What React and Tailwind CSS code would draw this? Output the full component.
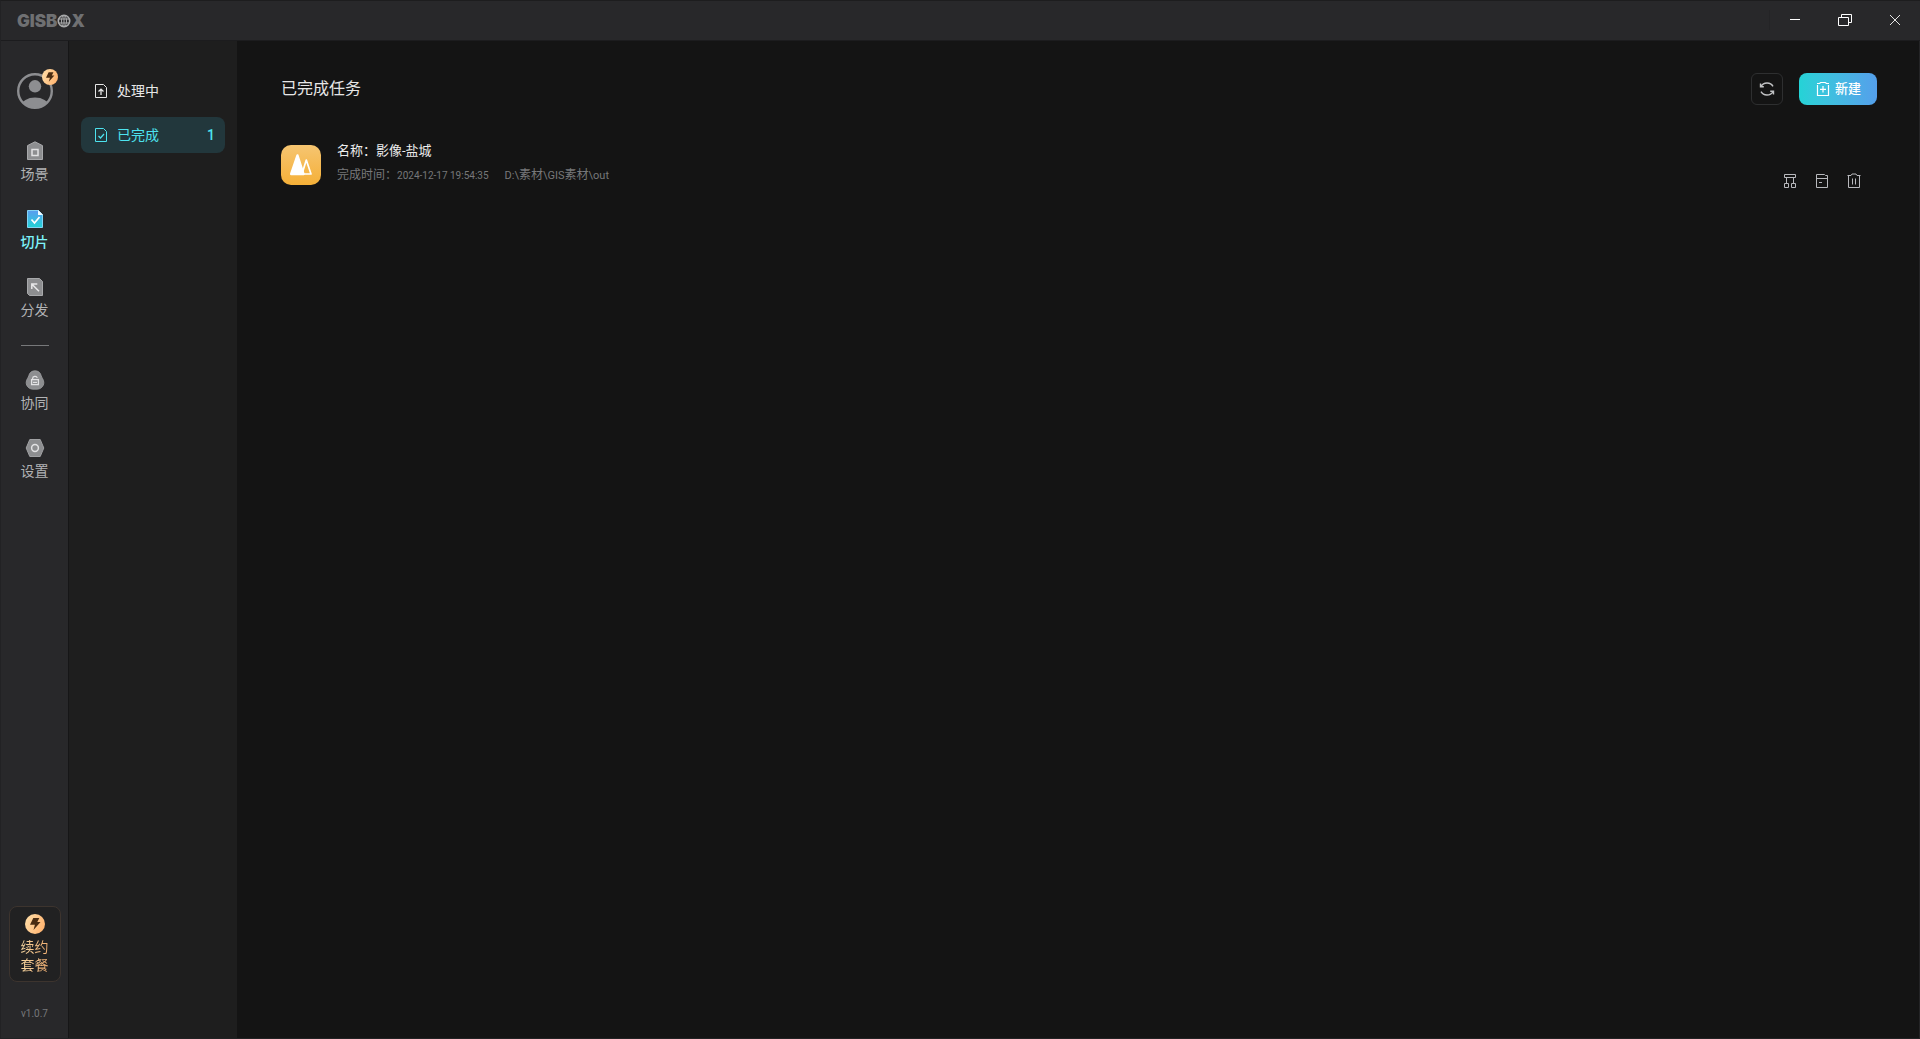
import React from "react";

const HomeIcon = () => (
  <svg width="20" height="20" viewBox="0 0 20 20" fill="none">
    <path d="M2.5 4.6 10 0.8l7.500 3.800V18.500h-15z" fill="#8d8e90" stroke="#a8a9ab" />
    <rect x="7" y="8.500" width="6" height="6" stroke="#e2e2e3" strokeWidth="1.500" />
  </svg>
);

const SliceIcon = () => (
  <svg width="20" height="20" viewBox="0 0 20 20" fill="none">
    <defs>
      <linearGradient id="slice" x1="0" y1="0" x2="0" y2="1">
        <stop stopColor="#5b9cf0" />
        <stop offset="1" stopColor="#22d3d6" />
      </linearGradient>
    </defs>
    <path d="M2.500 1.500h11l4 4v13h-15z" fill="url(#slice)" stroke="#82d4f4" />
    <path d="M13 1v5h5z" fill="#f2fbff" />
    <path d="m6.500 10.500 3 3.500 5-6" stroke="#fff" strokeWidth="1.700" />
  </svg>
);

const ShareIcon = () => (
  <svg width="20" height="20" viewBox="0 0 20 20" fill="none">
    <path d="M2.500 1.500h12l3 3v14h-13l-2-2z" fill="#8d8e90" stroke="#a8a9ab" />
    <path d="M6.800 12V7h5.500M7 7.200l7 7" stroke="#e8e8e9" strokeWidth="1.500" />
  </svg>
);

const TeamIcon = () => (
  <svg width="20" height="20" viewBox="0 0 20 20" fill="none">
    <path
      d="M10 .8c3.300 0 5.500 2 6.100 4.600.5 2.400 2.700 3.900 2.700 7.200 0 3.500-2.700 6.400-6.500 6.600h-4.600C3.900 19 1.200 16.100 1.200 12.600c0-3.300 2.200-4.800 2.700-7.200C4.500 2.800 6.700.8 10 .8z"
      fill="#8d8e90"
      stroke="#a0a1a3"
      strokeWidth="0.800"
    />
    <rect x="6.600" y="9.600" width="6.800" height="5" stroke="#e2e2e3" strokeWidth="1.300" />
    <path d="M7.600 9.500V8.500a2.400 2.200 0 0 1 4.700-.6M8 12.300h4" stroke="#e2e2e3" strokeWidth="1.200" />
  </svg>
);

const SettingsIcon = () => (
  <svg width="20" height="20" viewBox="0 0 20 20" fill="none">
    <path d="M4.800 1.500h10.400l3.600 8.500-3.600 8.500H4.800L1.200 10z" fill="#8d8e90" stroke="#a0a1a3" strokeLinejoin="round" />
    <circle cx="10" cy="10" r="3.400" stroke="#e2e2e3" strokeWidth="1.500" />
  </svg>
);

const Bolt = ({ size, id }) => (
  <svg width={size} height={size} viewBox="0 0 20 20">
    <defs>
      <linearGradient id={id} x1="0" y1="0.300" x2="1" y2="0.700">
        <stop stopColor="#ffdca6" />
        <stop offset="1" stopColor="#ffb26e" />
      </linearGradient>
    </defs>
    <circle cx="10" cy="10" r="10" fill={`url(#${id})`} />
    <path d="M8.300 4h6l-2 4h3.200l-7 8 1.400-5.200H5z" fill="#4a2c12" />
  </svg>
);

const Avatar = () => (
  <svg width="36" height="36" viewBox="0 0 36 36" fill="none">
    <defs>
      <clipPath id="face">
        <circle cx="18" cy="18" r="17" />
      </clipPath>
    </defs>
    <circle cx="18" cy="18" r="16.800" stroke="#8d8e91" strokeWidth="2.400" />
    <circle cx="18" cy="13.300" r="6.200" fill="#8d8e91" />
    <ellipse cx="18" cy="33" rx="13.500" ry="8.500" fill="#8d8e91" clipPath="url(#face)" />
  </svg>
);

const DocIcon = ({ children }) => (
  <svg width="14" height="16" viewBox="0 0 14 16" fill="none" stroke="currentColor">
    <path d="M1.500 1.500h8l3 3v10h-11z" />
    {children}
  </svg>
);

const Globe = () => (
  <svg width="14" height="14" viewBox="0 0 14 14" fill="none" stroke="#a9aaab">
    <circle cx="7" cy="7" r="5.700" strokeWidth="1.600" />
    <ellipse cx="7" cy="7" rx="2.500" ry="5.500" />
    <path d="M1.500 5h11M1.500 9h11M7 1v12" />
  </svg>
);

const NAV = [
  { label: "场景", icon: HomeIcon },
  { label: "切片", icon: SliceIcon, active: true },
  { label: "分发", icon: ShareIcon },
  null,
  { label: "协同", icon: TeamIcon },
  { label: "设置", icon: SettingsIcon },
];

function TitleBar() {
  return (
    <header className="flex h-10 shrink-0 items-center justify-between border-b border-[#1c1c1e] bg-[#28282a] pl-4">
      <div className="flex items-center font-['Inter'] text-[17px] leading-5 font-black text-[#6f7072]">
        <span>GISB</span>
        <Globe />
        <span>X</span>
      </div>
      <div className="flex items-center pb-0.5">
        <span className="h-5 w-px bg-[#242426]" />
        <button aria-label="最小化" className="flex h-9 w-[50px] items-center justify-center">
          <svg width="14" height="14" viewBox="0 0 14 14"><path d="M2 6.500h10" stroke="#fff" /></svg>
        </button>
        <button aria-label="还原" className="flex h-9 w-[50px] items-center justify-center">
          <svg width="14" height="14" viewBox="0 0 14 14" fill="none" stroke="#fff">
            <path d="M.5 4.500h10v8H.5zM3.500 4.500v-3h10v8h-3" />
          </svg>
        </button>
        <button aria-label="关闭" className="flex h-9 w-[50px] items-center justify-center">
          <svg width="14" height="14" viewBox="0 0 14 14" stroke="#e4e4e4"><path d="m2 2 10 10M12 2 2 12" /></svg>
        </button>
      </div>
    </header>
  );
}

function Rail() {
  return (
    <nav className="flex w-[68px] shrink-0 flex-col items-center border-r border-[#161617] bg-[#28282a] pt-8 pb-[15px]">
      <button aria-label="账户" className="relative mb-8 block">
        <Avatar />
        <span className="absolute -top-1 -right-[5px]">
          <Bolt size={16} id="bolt-small" />
        </span>
      </button>
      <div className="flex flex-col items-center gap-6">
        {NAV.map((item, i) =>
          item ? (
            <button
              key={i}
              className={`flex flex-col items-center gap-[3px] pb-px text-sm leading-5 ${item.active ? "font-medium text-[#7df3fa]" : "text-[#b2b3b5]"}`}
            >
              <item.icon />
              {item.label}
            </button>
          ) : (
            <hr key={i} className="w-7 border-t border-[#77787a]" />
          )
        )}
      </div>
      <button className="mt-auto flex w-[52px] flex-col items-center gap-1 rounded-lg border border-[#3d342e] bg-[#212122] py-[7px] text-sm leading-[18px]">
        <Bolt size={20} id="bolt-large" />
        <span className="w-7 bg-linear-to-r from-[#f6d6a0] to-[#f0ad70] bg-clip-text text-transparent">续约套餐</span>
      </button>
      <span className="mt-[23px] text-[10px] leading-[18px] text-[#77787a]">v1.0.7</span>
    </nav>
  );
}

function SidePanel() {
  return (
    <aside className="flex w-[168px] shrink-0 flex-col gap-2 bg-[#1e1e1e] px-3 pt-8">
      <button className="flex h-9 items-center gap-2 rounded-lg px-3 text-sm text-[#e6e6e6]">
        <span className="flex w-4 justify-center">
          <DocIcon><path d="M7 12V6.500M4.500 8.500 7 6.200l2.500 2.300" strokeWidth="1.300" /></DocIcon>
        </span>
        处理中
      </button>
      <button className="flex h-9 items-center gap-2 rounded-lg bg-[#22373c] pr-2.5 pl-3 text-sm text-[#4de3ef]">
        <span className="flex w-4 justify-center">
          <DocIcon><path d="m4.500 9 2 2L10 7" strokeWidth="1.200" /></DocIcon>
        </span>
        已完成
        <span className="ml-auto font-medium">1</span>
      </button>
    </aside>
  );
}

function TaskRow() {
  return (
    <li className="flex gap-4">
      <svg className="shrink-0" width="40" height="40" viewBox="0 0 40 40">
        <defs>
          <linearGradient id="task" x1="0" y1="0" x2="0" y2="1">
            <stop stopColor="#f6c571" />
            <stop offset="1" stopColor="#f5b038" />
          </linearGradient>
        </defs>
        <rect width="40" height="40" rx="10" fill="url(#task)" />
        <path d="m25.300 15 4.700 14h-9z" fill="none" stroke="#fff" strokeWidth="1.700" strokeLinejoin="round" />
        <path d="m16.500 10.500 6 18.500H10.200z" fill="#fff" stroke="#fff" strokeWidth="2.400" strokeLinejoin="round" />
      </svg>
      <div className="-mt-1 flex flex-col gap-1">
        <h2 className="text-[13px] leading-5 text-[#ececec]">名称：影像-盐城</h2>
        <p className="flex gap-4 text-xs leading-5 text-[#77787a]">
          <span>完成时间：<span className="text-[10px]">2024-12-17 19:54:35</span></span>
          <span>
            <span className="text-[11px]">D:\</span>素材<span className="text-[11px]">\GIS</span>素材<span className="text-[11px]">\out</span>
          </span>
        </p>
      </div>
      <div className="mt-7 mr-[15px] ml-auto flex h-4 gap-4 text-[#b8b9bd]">
        <button aria-label="发布">
          <svg width="16" height="16" viewBox="0 0 16 16" fill="none" stroke="currentColor">
            <path d="M2.500 1.500h11v3h-11zM4.500 5v5M11.500 5v5M2.500 10.500h4v4h-4zM9.500 10.500h4v4h-4z" />
          </svg>
        </button>
        <button aria-label="打开目录">
          <svg width="16" height="16" viewBox="0 0 16 16" fill="none" stroke="currentColor">
            <path d="M2.500 14.500v-13h8l1 1h2v12zM2.500 5.500h11M5 9.500h3" />
          </svg>
        </button>
        <button aria-label="删除">
          <svg width="16" height="16" viewBox="0 0 16 16" fill="none" stroke="currentColor">
            <path d="M2.500 3v11.500h11V3M1.500 2.500h3.500l1-1.500h4l1 1.500h3.500M6.500 5.500v6M9.500 5.500v6" />
          </svg>
        </button>
      </div>
    </li>
  );
}

export default function App() {
  return (
    <div className="flex h-screen flex-col overflow-hidden border border-t-[#1d1d1e] border-r-0 border-b-[#222224] border-l-[#222224] bg-[#141414] font-['Roboto','Noto_Sans_CJK_SC',sans-serif]">
      <TitleBar />
      <div className="flex min-h-0 flex-1">
        <Rail />
        <SidePanel />
        <main className="flex-1 border-r border-[#242426] pt-8 pr-[42px] pl-11">
          <div className="flex items-center justify-between">
            <h1 className="text-base text-[#e6e6e6]">已完成任务</h1>
            <div className="flex gap-4">
              <button aria-label="刷新" className="flex size-8 items-center justify-center rounded-md border border-[#2e2f30] text-[#c2c3c5]">
                <svg width="16" height="16" viewBox="0 0 16 16" fill="none" stroke="currentColor" strokeWidth="1.400">
                  <path d="M2 5.500C4.500 .8 11.500.8 14 5.300M14 10.500c-2.500 4.700-9.500 4.700-12 .2M1.500 2.500v3.200h3.300M14.500 13.500v-3.200h-3.300" />
                </svg>
              </button>
              <button className="flex h-8 w-[78px] items-center justify-center gap-1 rounded-lg bg-linear-to-r from-[#24d3d6] to-[#549feb] text-[13px] font-medium text-white">
                <svg width="16" height="16" viewBox="0 0 16 16" fill="none" stroke="currentColor" strokeWidth="1.200">
                  <path d="M2.500 4v10.500h11V4M2 2.500h2.500l1.200-1h4.600l1.200 1H14M8 5v6.500M5 8.300h6" />
                </svg>
                新建
              </button>
            </div>
          </div>
          <ul className="mt-10">
            <TaskRow />
          </ul>
        </main>
      </div>
    </div>
  );
}
